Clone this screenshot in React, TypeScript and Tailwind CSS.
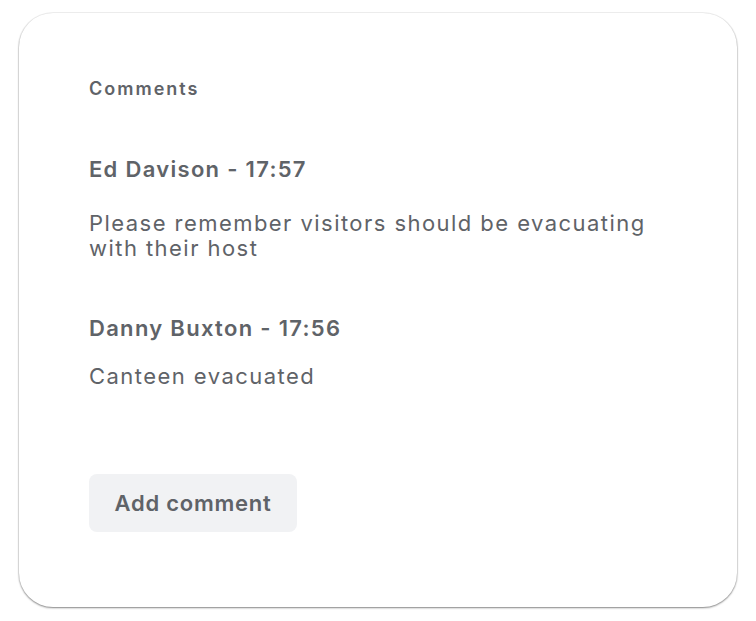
export default function App() {
  return (
    <div className="min-h-screen bg-white pl-[19px] pt-[13px] font-['Inter',sans-serif] text-[#5f6368]">
      <div className="flex h-[594px] w-[718px] flex-col rounded-[34px] bg-white pl-[70px] pr-[60px] pt-[64px] shadow-[0_1px_2px_rgba(0,0,0,0.45),0_0_0_1px_rgba(0,0,0,0.05)]">
        <h2 className="text-[18px] font-semibold leading-6 tracking-[2px]">Comments</h2>

        <div className="mt-[54px]">
          <div className="text-[22px] font-semibold leading-7 tracking-[1.3px]">Ed Davison - 17:57</div>
          <p className="mt-[28px] text-[22px] leading-[25px] tracking-[1.45px]">
            Please remember visitors should be evacuating with their host
          </p>
        </div>

        <div className="mt-[53px]">
          <div className="text-[22px] font-semibold leading-7 tracking-[1.3px]">Danny Buxton - 17:56</div>
          <p className="mt-[22px] text-[22px] leading-[25px] tracking-[1.45px]">Canteen evacuated</p>
        </div>

        <div className="mt-[85px]">
          <button className="h-[58px] w-[208px] rounded-lg bg-[#f1f2f4] text-[22px] font-semibold tracking-[0.75px]">
            Add comment
          </button>
        </div>
      </div>
    </div>
  );
}
